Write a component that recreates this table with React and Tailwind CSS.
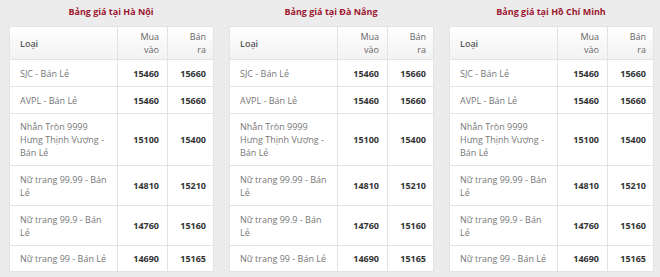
import React from "react";

const rows = [
  { name: "SJC - Bán Lẻ", buy: "15460", sell: "15660", h: "h-[27px]" },
  { name: "AVPL - Bán Lẻ", buy: "15460", sell: "15660", h: "h-[27px]" },
  { name: "Nhẫn Tròn 9999 Hưng Thịnh Vượng - Bán Lẻ", buy: "15100", sell: "15400", h: "h-[52px]" },
  { name: "Nữ trang 99.99 - Bán Lẻ", buy: "14810", sell: "15210", h: "h-[40px]" },
  { name: "Nữ trang 99.9 - Bán Lẻ", buy: "14760", sell: "15160", h: "h-[40px]" },
  { name: "Nữ trang 99 - Bán Lẻ", buy: "14690", sell: "15165", h: "h-[26px]" },
];

function PriceTable({ city }) {
  return (
    <div className="w-[220px] pl-[9px] pr-[7px]">
      <div className="h-[26px] flex items-center justify-center text-[9px] font-bold text-[#9c1730] pb-[2px]">
        Bảng giá tại {city}
      </div>
      <table className="w-[204px] border-collapse table-fixed bg-white text-[9px] leading-[13px]">
        <colgroup>
          <col className="w-[108px]" />
          <col className="w-[50px]" />
          <col className="w-[46px]" />
        </colgroup>
        <thead>
          <tr className="h-[33px] bg-gradient-to-b from-white to-[#f2f2f2]">
            <th className="border border-[#e3e3e3] text-left font-semibold text-[#555] pl-[10px] align-middle">
              Loại
            </th>
            <th className="border border-[#e3e3e3] text-right font-normal text-[#666] pr-[8px] align-middle">
              Mua<br />vào
            </th>
            <th className="border border-[#e3e3e3] text-right font-normal text-[#666] pr-[7px] align-middle">
              Bán<br />ra
            </th>
          </tr>
        </thead>
        <tbody>
          {rows.map((r) => (
            <tr key={r.name} className={r.h}>
              <td className="border border-[#e3e3e3] text-[#777] pl-[10px] pr-[8px] align-middle">
                {r.name}
              </td>
              <td className="border border-[#e3e3e3] text-right font-bold text-[#333] pr-[8px] align-middle">
                {r.buy}
              </td>
              <td className="border border-[#e3e3e3] text-right font-bold text-[#333] pr-[7px] align-middle">
                {r.sell}
              </td>
            </tr>
          ))}
        </tbody>
      </table>
    </div>
  );
}

export default function App() {
  return (
    <div className="w-[660px] h-[277px] bg-[#ececec] flex overflow-hidden" style={{ fontFamily: '"Open Sans", "Noto Sans", sans-serif' }}>
      <PriceTable city="Hà Nội" />
      <PriceTable city="Đà Nẵng" />
      <PriceTable city="Hồ Chí Minh" />
    </div>
  );
}
